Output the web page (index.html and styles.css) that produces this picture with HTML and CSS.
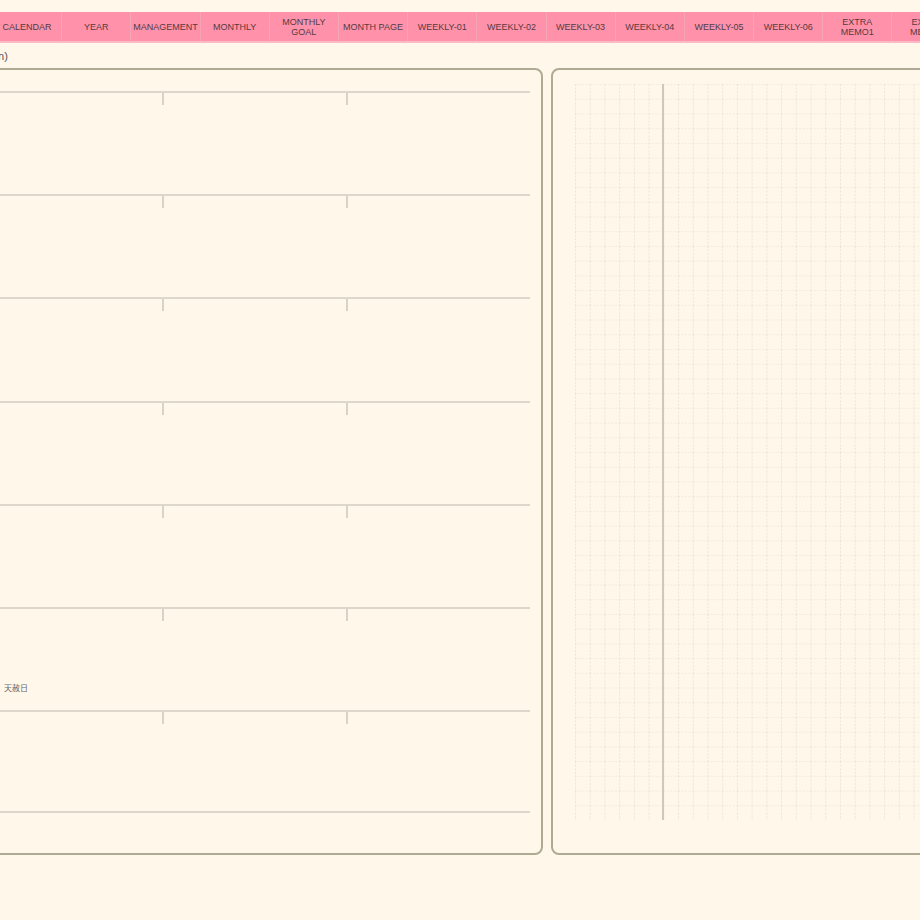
FILE: index.html
```html
<!DOCTYPE html>
<html lang="ja">
<head>
    <meta charset="UTF-8">
    <meta name="viewport" content="width=device-width, initial-scale=1.0">
    <title>Monthly Page</title>
    <link rel="stylesheet" href="styles.css">
</head>
<body>

    <nav class="tabs">
        <a class="tab">CALENDAR</a>
        <a class="tab">YEAR</a>
        <a class="tab">MANAGEMENT</a>
        <a class="tab">MONTHLY</a>
        <a class="tab">MONTHLY<br>GOAL</a>
        <a class="tab">MONTH PAGE</a>
        <a class="tab">WEEKLY-01</a>
        <a class="tab">WEEKLY-02</a>
        <a class="tab">WEEKLY-03</a>
        <a class="tab">WEEKLY-04</a>
        <a class="tab">WEEKLY-05</a>
        <a class="tab">WEEKLY-06</a>
        <a class="tab">EXTRA<br>MEMO1</a>
        <a class="tab">EXTRA<br>MEMO2</a>
    </nav>

    <div class="page-head">
        <span class="day-name">(Sun)</span>
    </div>

    <div class="sheet">
        <!-- left: seven day rows -->
        <section class="panel days">
            <div class="day-row"><div class="ticks"><span></span><span></span><span></span></div></div>
            <div class="day-row"><div class="ticks"><span></span><span></span><span></span></div></div>
            <div class="day-row"><div class="ticks"><span></span><span></span><span></span></div></div>
            <div class="day-row"><div class="ticks"><span></span><span></span><span></span></div></div>
            <div class="day-row"><div class="ticks"><span></span><span></span><span></span></div></div>
            <div class="day-row">
                <div class="ticks"><span></span><span></span><span></span></div>
                <span class="day-note">天赦日</span>
            </div>
            <div class="day-row last"><div class="ticks"><span></span><span></span><span></span></div></div>
        </section>

        <!-- right: memo grid -->
        <section class="panel memo">
            <div class="grid">
                <svg width="100%" height="100%">
                    <defs>
                        <pattern id="cell" width="14.72" height="14.72" patternUnits="userSpaceOnUse">
                            <path d="M0 0.5 H14.72" stroke="#f3eadd" stroke-width="1" stroke-dasharray="2 1.5" fill="none"/>
                            <path d="M0.5 0 V14.72" stroke="#eee4d5" stroke-width="1" stroke-dasharray="2 1.5" fill="none"/>
                        </pattern>
                    </defs>
                    <rect width="100%" height="100%" fill="url(#cell)"/>
                </svg>
                <div class="margin-line"></div>
            </div>
        </section>
    </div>

</body>
</html>
```

FILE: styles.css
```css
body {
    margin: 0;
    background-color: #fff7ea;
    font-family: "Liberation Sans", Arial, "Noto Sans CJK JP", sans-serif;
    overflow: hidden;
}

/* tab strip */
.tabs {
    display: flex;
    margin: 12px 0 0 -7px;
    width: max-content;
    background-color: #ff92aa;
    border-bottom: 2px solid #fcb9c6;
}

.tab {
    width: 69.2px;
    height: 29px;
    box-sizing: border-box;
    display: flex;
    align-items: center;
    justify-content: center;
    text-align: center;
    font-size: 9px;
    line-height: 10px;
    color: #553a41;
    border-right: 1px solid #f3a4b5;
}

/* heading line under the tabs */
.page-head {
    height: 25px;
    display: flex;
    align-items: center;
    margin-left: -19px;
}

.day-name {
    font-size: 11px;
    color: #555;
}

/* the two framed panels */
.sheet {
    display: flex;
    gap: 8px;
    margin-left: -35px;
}

.panel {
    flex: none;
    width: 578px;
    height: 787px;
    box-sizing: border-box;
    border: 2px solid #aeab95;
    border-radius: 8px;
}

.days {
    display: flex;
    flex-direction: column;
    padding: 21px 11px 0 11px;
}

.day-row {
    height: 103.2px;
    box-sizing: border-box;
    border-top: 2px solid #ddd6ca;
    display: flex;
    flex-direction: column;
    justify-content: space-between;
}

.day-row.last {
    border-bottom: 2px solid #ddd6ca;
}

.ticks {
    display: grid;
    grid-template-columns: repeat(3, 1fr);
    height: 12px;
}

.ticks span + span {
    border-left: 2px solid #d9d2c6;
}

.day-note {
    font-size: 8px;
    color: #666;
    padding-left: 26px;
    margin-bottom: 17px;
}

.memo {
    padding: 14px 22px 0 22px;
}

.grid {
    position: relative;
    height: 736px;
}

.grid svg {
    display: block;
}

.margin-line {
    position: absolute;
    top: 0;
    bottom: 0;
    left: 87px;
    width: 2px;
    background-color: #cdc7bc;
}
```
